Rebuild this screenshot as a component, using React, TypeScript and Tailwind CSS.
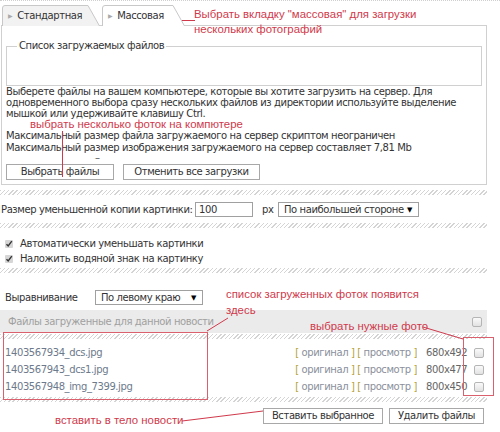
import React from "react"

const hatch =
  "h-[5px] w-full bg-[repeating-linear-gradient(135deg,#d4d4d4_0px,#d4d4d4_1px,#ffffff_1px,#ffffff_3px)]"

function Tab({ label, active, width }: { label: string; active?: boolean; width: number }) {
  const slant = width - 12
  return (
    <div className={`relative h-[21px] ${active ? "z-10" : ""}`} style={{ width }}>
      <svg className="absolute inset-0" width={width} height={21}>
        <path
          d={`M0.5 21 V3 Q0.5 0.5 3 0.5 H${slant} L${width - 0.5} 21`}
          fill={active ? "#ffffff" : "#f2f2f2"}
          stroke="#c8c8c8"
        />
      </svg>
      <div className="relative flex h-full items-center pl-[6px] text-[10px] text-[#333]">
        <span className="mr-[5px] text-[6px] text-[#aaa]">▶</span>
        {label}
      </div>
    </div>
  )
}

function Btn({ children, w }: { children: React.ReactNode; w: string }) {
  return (
    <div className={`flex h-[16px] items-center justify-center border border-[#a8a8a8] bg-white text-[10px] text-[#333] ${w}`}>
      {children}
    </div>
  )
}

function Select({ label, w }: { label: string; w: string }) {
  return (
    <div className={`flex h-[15px] items-center justify-between whitespace-nowrap border border-[#a0a0a0] bg-white pl-[5px] pr-[6px] text-[10px] text-[#333] ${w}`}>
      <span>{label}</span>
      <span className="text-[7px] text-black">▼</span>
    </div>
  )
}

function CheckedBox() {
  return (
    <div className="flex h-[8px] w-[8px] items-center justify-center rounded-[1px] bg-[#d6d6d6]">
      <svg width="8" height="8" viewBox="0 0 8 8">
        <path d="M1.5 4.2 L3.2 6 L6.8 1.2" fill="none" stroke="#333" strokeWidth="1.4" />
      </svg>
    </div>
  )
}

function EmptyBox() {
  return (
    <div className="h-[10px] w-[10px] rounded-[2px] border border-[#b5b5b5] bg-gradient-to-b from-[#fafafa] to-[#e2e2e2]" />
  )
}

const files = [
  { name: "1403567934_dcs.jpg", size: "680x492" },
  { name: "1403567943_dcs1.jpg", size: "800x477" },
  { name: "1403567948_img_7399.jpg", size: "800x450" },
]

const note =
  "absolute whitespace-nowrap font-['Liberation_Sans',sans-serif] text-[11.4px] leading-[11px] tracking-normal text-[#d0394b]"

export default function App() {
  return (
    <div className="relative h-[432px] w-[500px] overflow-hidden bg-white font-['DejaVu_Sans',sans-serif] text-[10px] leading-[12px] tracking-[-0.4px] text-[#444]">
      <div className="border-t border-dotted border-[#cfcfcf] pt-[4px]">
        <div className="w-[487px]">
          {/* tabs */}
          <div className="relative -mb-px flex gap-[2px] pl-[2px]">
            <Tab label="Стандартная" width={98} />
            <Tab label="Массовая" active width={83} />
          </div>

          {/* upload panel */}
          <div className="ml-[1px] border border-[#d0d0d0] px-[4px] pb-[4px]">
            <fieldset className="mt-[14px] h-[46px] border border-[#d0d0d0] pl-[10px]">
              <legend className="px-[2px] text-[10px] leading-[12px] text-[#333]">Список загружаемых файлов</legend>
            </fieldset>
            <div className="whitespace-nowrap leading-[11px] text-[#333]">
              <div>Выберете файлы на вашем компьютере, которые вы хотите загрузить на сервер. Для</div>
              <div>одновременного выбора сразу нескольких файлов из директории используйте выделение</div>
              <div>мышкой или удерживайте клавишу Ctrl.</div>
            </div>
            <div className="mt-[11px] whitespace-nowrap text-[#333]">
              <div>Максимальный размер файла загружаемого на сервер скриптом неограничен</div>
              <div>Максимальный размер изображения загружаемого на сервер составляет 7,81 Mb</div>
            </div>
            <div className="h-[8px] pl-[89px] leading-[8px] text-[#555]">–</div>
            <div className="mt-[2px] flex gap-[9px]">
              <Btn w="w-[108px]">Выбрать файлы</Btn>
              <Btn w="w-[137px]">Отменить все загрузки</Btn>
            </div>
          </div>

          <div className={`${hatch} mt-[5px]`} />

          {/* resize row */}
          <div className="mt-[7px] flex h-[15px] items-center whitespace-nowrap text-[#333]">
            <span className="w-[195px] pl-[1px]">Размер уменьшенной копии картинки:</span>
            <div className="flex h-[15px] w-[58px] items-center border border-[#a0a0a0] pl-[3px]">100</div>
            <span className="ml-[9px] w-[16px]">px</span>
            <Select label="По наибольшей стороне" w="w-[141px]" />
          </div>

          <div className={`${hatch} mt-[6px]`} />

          {/* checkboxes */}
          <div className="mt-[8px] text-[#333]">
            <div className="flex h-[15px] items-center gap-[7px] pl-[5px]">
              <CheckedBox />
              Автоматически уменьшать картинки
            </div>
            <div className="flex h-[15px] items-center gap-[7px] pl-[5px]">
              <CheckedBox />
              Наложить водяной знак на картинку
            </div>
          </div>

          <div className={`${hatch} mt-[2px]`} />

          {/* alignment */}
          <div className="mt-[17px] flex h-[15px] items-center text-[#333]">
            <span className="w-[95px] pl-[5px]">Выравнивание</span>
            <Select label="По левому краю" w="w-[108px]" />
          </div>

          {/* files header */}
          <div className="mt-[5px] flex h-[23px] items-center justify-between bg-[#ebebeb] pl-[8px] pr-[5px] text-[#a0a0a0]">
            <span>Файлы загруженные для данной новости</span>
            <EmptyBox />
          </div>

          <div className={`${hatch} mt-[1px]`} />

          {/* files */}
          <div className="mt-[5px]">
            {files.map((f) => (
              <div key={f.name} className="flex h-[17px] items-center pl-[5px] pr-[3px] text-[#666]">
                <span className="text-[#6d7a8c]">{f.name}</span>
                <span className="ml-auto text-[#8a8f9c]">
                  <span className="text-[#b5a33a]">[</span> оригинал <span className="text-[#b5a33a]">]</span>{" "}
                  <span className="text-[#b5a33a]">[</span> просмотр <span className="text-[#b5a33a]">]</span>
                </span>
                <span className="ml-[9px] w-[46px] text-[#666]">{f.size}</span>
                <div className="ml-[2px]">
                  <EmptyBox />
                </div>
              </div>
            ))}
          </div>

          <div className={`${hatch} mt-[2px]`} />

          <div className="mt-[6px] flex justify-end gap-[6px] pr-[3px]">
            <Btn w="w-[120px]">Вставить выбранное</Btn>
            <Btn w="w-[95px]">Удалить файлы</Btn>
          </div>
        </div>
      </div>

      {/* annotations */}
      <div className={note} style={{ left: 194, top: 9 }}>Выбрать вкладку "массовая" для загрузки</div>
      <div className={note} style={{ left: 194, top: 24 }}>нескольких фотографий</div>
      <div className={note} style={{ left: 30, top: 119 }}>выбрать несколько фоток на компютере</div>
      <div className={note} style={{ left: 226, top: 289 }}>список загруженных фоток появится</div>
      <div className={note} style={{ left: 226, top: 305 }}>здесь</div>
      <div className={note} style={{ left: 310, top: 321 }}>выбрать нужные фото</div>
      <div className={note} style={{ left: 55, top: 415 }}>вставить в тело новости</div>

      <svg className="pointer-events-none absolute inset-0" width="500" height="432">
        <g fill="none" stroke="#d0394b" strokeWidth="1">
          <path d="M123 20.5 H195" />
          <path d="M62.5 131 V177" />
          <rect x="3.5" y="332.5" width="204" height="67" stroke="#d9606c" />
          <path d="M207 331 L228 318" />
          <rect x="463.5" y="337.5" width="30" height="58" stroke="#d9606c" />
          <path d="M423 327 L463 339" />
          <path d="M182 421 L263 411" />
        </g>
      </svg>
    </div>
  )
}
